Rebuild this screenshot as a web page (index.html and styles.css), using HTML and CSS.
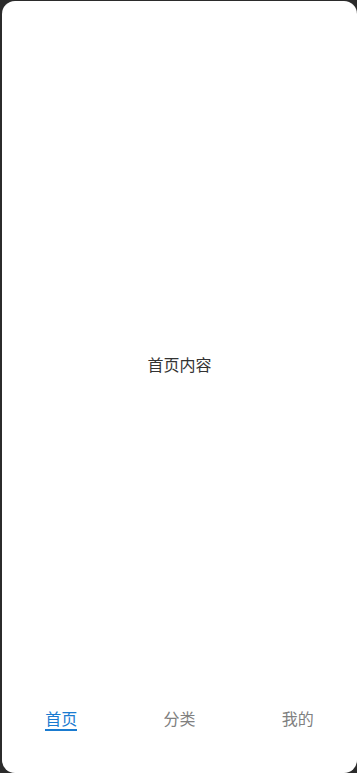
FILE: index.html
```html
<!DOCTYPE html>
<html lang="zh-CN">
<head>
<meta charset="utf-8">
<link rel="stylesheet" href="styles.css">
</head>
<body>
<div class="screen">
  <main class="main">
    <div class="content-text">首页内容</div>
  </main>
  <nav class="tabbar">
    <div class="tab"><span class="tab-label active">首页</span></div>
    <div class="tab"><span class="tab-label">分类</span></div>
    <div class="tab"><span class="tab-label">我的</span></div>
  </nav>
</div>
</body>
</html>
```
FILE: styles.css
```css
html, body {
  margin: 0;
  padding: 0;
  height: 100%;
}
body {
  background: #2b2b2b;
  font-family: "Noto Sans CJK SC", "Noto Sans", sans-serif;
  padding: 1px 0 0 2px;
  box-sizing: border-box;
  overflow: hidden;
}
.screen {
  background: #ffffff;
  height: 772px;
  border-radius: 13px;
  display: flex;
  flex-direction: column;
}
.main {
  flex: 1;
  display: flex;
  align-items: center;
  justify-content: center;
  padding-top: 30px;
}
.content-text {
  font-size: 16px;
  color: #333333;
  line-height: 20px;
}
.tabbar {
  height: 76px;
  box-sizing: border-box;
  padding-top: 12px;
  display: flex;
}
.tab {
  flex: 1;
  display: flex;
  justify-content: center;
  align-items: flex-start;
}
.tab-label {
  font-size: 16px;
  line-height: 19px;
  padding-bottom: 1px;
  color: #808080;
  border-bottom: 2px solid transparent;
}
.tab-label.active {
  color: #1a7bd0;
  border-bottom-color: #1a7bd0;
}
```
